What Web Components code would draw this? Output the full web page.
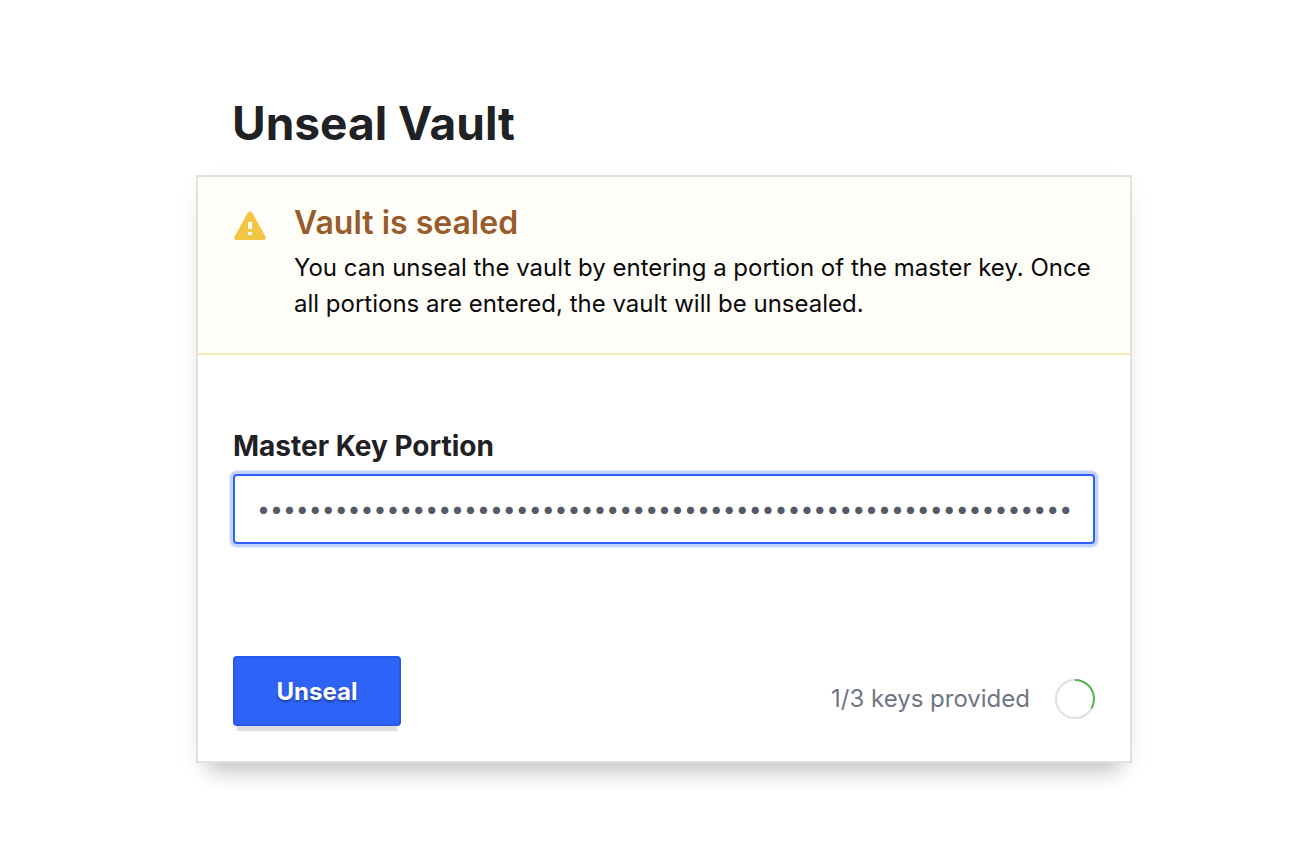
<!DOCTYPE html>
<html lang="en">
<head>
<meta charset="utf-8">
<meta name="viewport" content="width=device-width, initial-scale=1">
<title>Unseal Vault</title>
<style>
  body { margin: 0; background: #fff; color: #1f2124; font-family: Inter, "Liberation Sans", sans-serif; font-size: 24px; line-height: 36px; }
</style>
</head>
<body>
<unseal-page></unseal-page>

<script>
const define = (name, html, setup) => {
  const template = document.createElement('template');
  template.innerHTML = '<style>*{box-sizing:border-box}</style>' + html;
  customElements.define(name, class extends HTMLElement {
    constructor() {
      super();
      this.attachShadow({ mode: 'open' }).append(template.content.cloneNode(true));
    }
    connectedCallback() { if (setup) setup(this, this.shadowRoot); }
  });
};

define('alert-banner', `
  <style>
    :host { display: flex; gap: 28px; padding: 27px 36px 31px; background: #fffdf8; border-bottom: 2px solid #faeab7; }
    svg { flex: none; width: 32px; height: 32px; margin-top: 6px; }
    h2 { margin: 0 0 8px; font-size: 32px; line-height: 38px; font-weight: 600; color: #975b2c; }
    p { margin: 0; color: #0a0a0a; }
  </style>
  <svg viewBox="0 0 32 32" aria-hidden="true">
    <path d="M13.5 3.2Q16 -.1 18.5 3.2L31.6 26.8Q32.5 30 29.2 30H2.8Q-.5 30 .4 26.8Z" fill="#f2c545"/>
    <path d="M14 12h4v7h-4zM14 22h4v3h-4z" fill="#fffdf8"/>
  </svg>
  <div><h2><slot name="title"></slot></h2><p><slot></slot></p></div>`);

define('key-field', `
  <style>
    :host { display: block; }
    label { display: block; margin-bottom: 10px; font-size: 28px; line-height: 36px; font-weight: 700; }
    input { display: block; width: 100%; height: 70px; padding: 0 22px; border: 2px solid #2e61f6; border-radius: 4px;
      outline: 0; background: #fff; color: #545a66; box-shadow: 0 0 0 3px #c5d2fb, 0 0 0 4px #e4eafd;
      font-family: Inter, "Liberation Sans", sans-serif; font-size: 23px; }
  </style>
  <label for="key"></label>
  <input id="key" type="password" autocomplete="off">`, (host, root) => {
  root.querySelector('label').textContent = host.getAttribute('label');
  root.querySelector('input').value = '0'.repeat(63);
});

define('primary-button', `
  <style>
    :host { display: inline-block; }
    button { display: block; min-width: 168px; height: 70px; padding: 2px 40px 0; border: 2px solid #2759ee; border-radius: 4px;
      background: #2e63f7; color: #fff; font: inherit; font-weight: 700; text-shadow: 0 2px 2px rgba(0,0,0,.35);
      box-shadow: 0 9px 1px -4px #dedede; cursor: pointer; }
  </style>
  <button type="submit"><slot></slot></button>`);

define('key-progress', `
  <style>
    :host { display: flex; align-items: center; gap: 24px; color: #6f7682; }
    svg { width: 42px; height: 42px; margin-right: -1px; }
    circle { fill: none; stroke-width: 2; }
  </style>
  <span></span>
  <svg viewBox="0 0 42 42" aria-hidden="true">
    <circle cx="21" cy="21" r="19" stroke="#dcdfe4"/>
    <circle class="done" cx="21" cy="21" r="19" stroke="#5eb15b" pathLength="100" transform="rotate(-90 21 21)"/>
  </svg>`, (host, root) => {
  const done = Number(host.getAttribute('done')), total = Number(host.getAttribute('total'));
  root.querySelector('span').textContent = done + '/' + total + ' keys provided';
  root.querySelector('.done').setAttribute('stroke-dasharray', (100 * done / total) + ' 100');
});

define('unseal-card', `
  <style>
    :host { display: block; border: 2px solid #e1e1e1; background: #fff;
      box-shadow: 0 20px 20px -12px rgba(0,0,0,.2), 0 8px 28px -6px rgba(0,0,0,.08); }
    form { padding: 73px 35px 35px; }
    footer { display: flex; justify-content: space-between; align-items: flex-end; margin-top: 112px; }
    key-progress { margin-bottom: 6px; }
  </style>
  <alert-banner>
    <span slot="title">Vault is sealed</span>
    You can unseal the vault by entering a portion of the master key. Once all portions are entered, the vault will be unsealed.
  </alert-banner>
  <form>
    <key-field label="Master Key Portion"></key-field>
    <footer>
      <primary-button>Unseal</primary-button>
      <key-progress done="1" total="3"></key-progress>
    </footer>
  </form>`);

define('unseal-page', `
  <style>
    :host { display: block; padding: 95px 24px 60px 36px; }
    main { max-width: 936px; margin: 0 auto; }
    h1 { margin: 0 0 24px; padding-left: 36px; font-size: 46px; line-height: 56px; font-weight: 700; }
  </style>
  <main>
    <h1>Unseal Vault</h1>
    <unseal-card></unseal-card>
  </main>`);
</script>
</body>
</html>
